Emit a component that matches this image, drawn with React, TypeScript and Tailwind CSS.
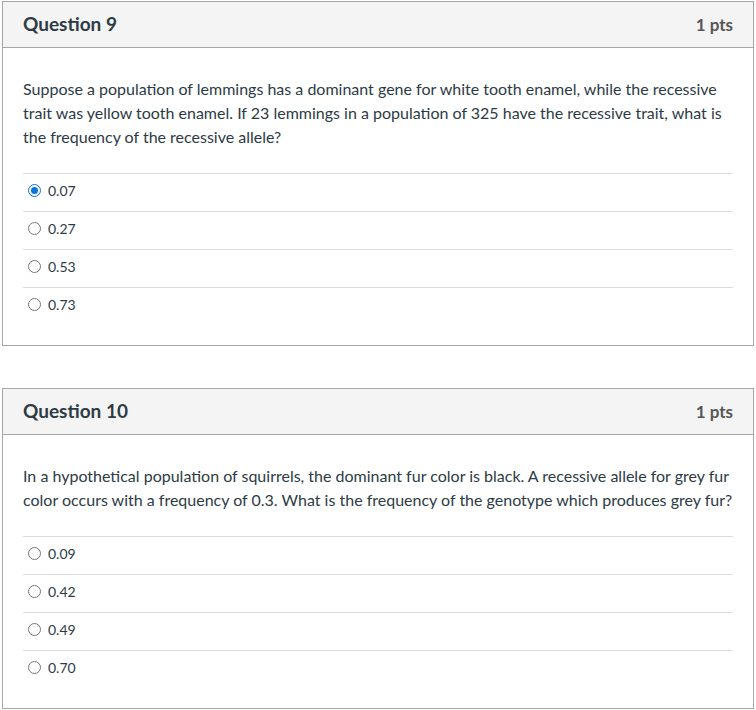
import { useState } from 'react'

type Question = {
  id: number
  title: string
  points: string
  text: string
  answers: string[]
  selected?: number
}

const questions: Question[] = [
  {
    id: 9,
    title: 'Question 9',
    points: '1 pts',
    text: 'Suppose a population of lemmings has a dominant gene for white tooth enamel, while the recessive trait was yellow tooth enamel. If 23 lemmings in a population of 325 have the recessive trait, what is the frequency of the recessive allele?',
    answers: ['0.07', '0.27', '0.53', '0.73'],
    selected: 0,
  },
  {
    id: 10,
    title: 'Question 10',
    points: '1 pts',
    text: 'In a hypothetical population of squirrels, the dominant fur color is black. A recessive allele for grey fur color occurs with a frequency of 0.3. What is the frequency of the genotype which produces grey fur?',
    answers: ['0.09', '0.42', '0.49', '0.70'],
  },
]

function Radio({ checked }: { checked: boolean }) {
  if (checked) {
    return (
      <span className="ml-[5px] mr-[7px] flex h-[13px] w-[13px] shrink-0 items-center justify-center rounded-full border-[1.5px] border-[#0b74de] bg-white">
        <span className="h-[7px] w-[7px] rounded-full bg-[#0b74de]" />
      </span>
    )
  }
  return (
    <span className="ml-[5px] mr-[7px] h-[13px] w-[13px] shrink-0 rounded-full border border-[#767676] bg-white" />
  )
}

function QuestionCard({ q }: { q: Question }) {
  const [selected, setSelected] = useState<number | undefined>(q.selected)
  return (
    <div className="border border-[#a6a6a6] bg-white">
      <div className="flex h-[46px] items-center justify-between border-b border-[#a6a6a6] bg-[#f4f4f4] px-5">
        <h2 className="text-[19px] font-bold text-[#2d3b45]">{q.title}</h2>
        <span className="text-[17px] font-bold text-[#565656]">{q.points}</span>
      </div>
      <div className="px-5 pb-5 pt-[29px]">
        <p className="text-[16px] leading-6 text-[#2d3b45]">{q.text}</p>
        <div className="mt-6">
          {q.answers.map((a, i) => (
            <label
              key={a}
              onClick={() => setSelected(i)}
              className="flex h-[38px] cursor-pointer items-center border-t border-[#dcdcdc] pb-[5px] text-[14px] text-[#2d3b45]"
            >
              <Radio checked={selected === i} />
              <span>{a}</span>
            </label>
          ))}
        </div>
      </div>
    </div>
  )
}

export default function App() {
  return (
    <div className="ml-[2px] mr-[2px] mt-px flex flex-col gap-[42px] bg-white font-['Lato','Liberation_Sans',sans-serif]">
      {questions.map((q) => (
        <QuestionCard key={q.id} q={q} />
      ))}
    </div>
  )
}
